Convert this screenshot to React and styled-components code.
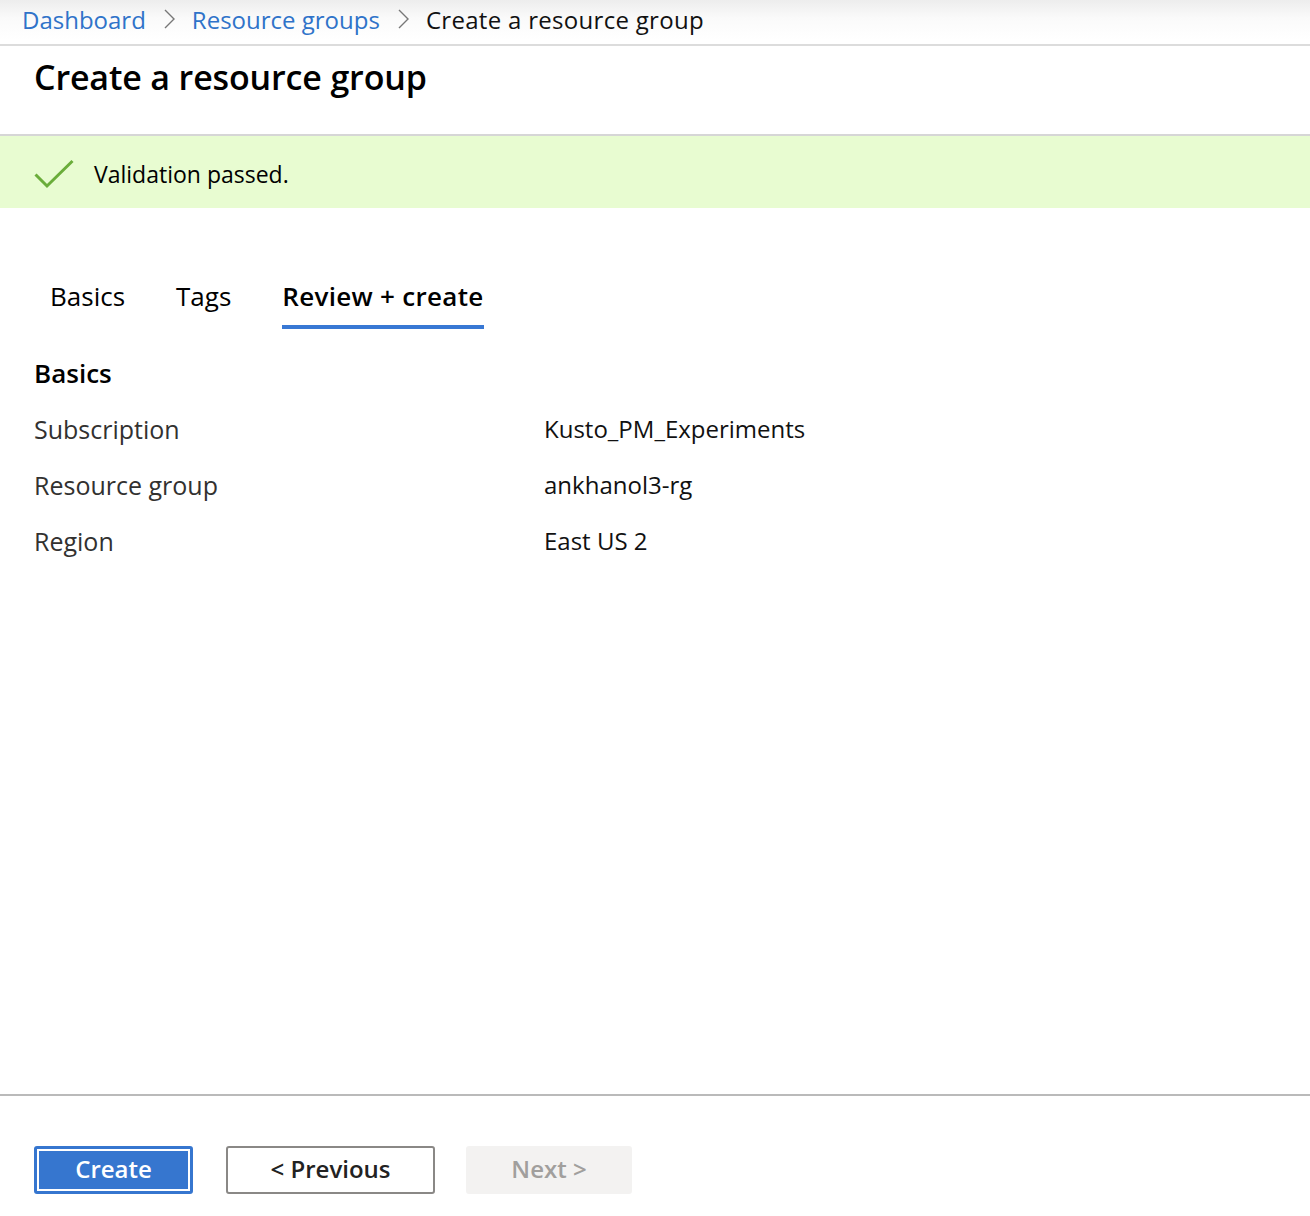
import React from "react";
import styled, { createGlobalStyle } from "styled-components";

const Global = createGlobalStyle`
  html, body { margin: 0; padding: 0; background: #fff; }
  body { font-family: "Open Sans", "Noto Sans", sans-serif; color: #000; }
  #root { min-height: 100vh; display: flex; flex-direction: column; }
`;

const Page = styled.div`
  flex: 1;
  display: flex;
  flex-direction: column;
  min-height: 1216px;
`;

const Breadcrumb = styled.nav`
  height: 46px;
  display: flex;
  align-items: center;
  padding: 0 0 6px 22px;
  box-sizing: border-box;
  background: linear-gradient(#ededed 0px, #fafafa 18px, #fff 40px);
  border-bottom: 2px solid #dcdcdc;
  font-size: 24px;
`;

const Crumb = styled.span`
  color: ${(p) => (p.$link ? "#2f73c9" : "#111")};
  letter-spacing: ${(p) => (p.$link ? "0" : "0.3px")};
`;

const Chevron = styled.svg`
  width: 12px;
  height: 20px;
  margin: 0 16px 0 18px;
`;

const Header = styled.header`
  height: 90px;
  display: flex;
  align-items: flex-start;
  padding: 8px 34px 0;
  box-sizing: border-box;
  border-bottom: 2px solid #d6d6d6;
`;

const Title = styled.h1`
  margin: 0;
  font-size: 34px;
  line-height: 46px;
  font-weight: 600;
  letter-spacing: -0.15px;
`;

const Banner = styled.div`
  height: 72px;
  background: #e8fcd1;
  display: flex;
  align-items: center;
  padding: 3px 0 0 34px;
  box-sizing: border-box;
  gap: 20px;
  font-size: 23px;
`;

const Content = styled.main`
  flex: 1;
  padding: 71px 34px 0;
`;

const Tabs = styled.div`
  display: flex;
  gap: 51px;
  padding-left: 16px;
`;

const Tab = styled.div`
  font-size: 26px;
  font-weight: ${(p) => (p.$active ? 600 : 400)};
  letter-spacing: ${(p) => (p.$active ? "0.3px" : "0")};
  padding-bottom: 12px;
  border-bottom: 4px solid ${(p) => (p.$active ? "#3878d4" : "transparent")};
  line-height: 34px;
`;

const SectionTitle = styled.h2`
  margin: 26px 0 0;
  font-size: 26px;
  font-weight: 600;
  line-height: 36px;
`;

const Row = styled.div`
  display: grid;
  grid-template-columns: 510px 1fr;
  align-items: center;
  margin-top: 20px;
  line-height: 36px;
`;

const Label = styled.div`
  color: #323130;
  font-size: 25px;
`;

const Value = styled.div`
  color: #111;
  font-size: 24px;
`;

const Footer = styled.footer`
  border-top: 2px solid #bababa;
  height: 122px;
  box-sizing: border-box;
  display: flex;
  align-items: flex-start;
  padding: 50px 34px 0;
`;

const Button = styled.button`
  height: 48px;
  box-sizing: border-box;
  border-radius: 3px;
  font-family: inherit;
  font-size: 24px;
  font-weight: 600;
  padding: 0 0 3px;
  width: ${(p) => p.$w}px;
  background: ${(p) => (p.$primary ? "#3676cf" : p.$disabled ? "#f3f2f1" : "#fff")};
  color: ${(p) => (p.$primary ? "#fff" : p.$disabled ? "#a19f9d" : "#222")};
  border: ${(p) =>
    p.$primary ? "3px solid #3676cf" : p.$disabled ? "2px solid #f3f2f1" : "2px solid #8a8886"};
  box-shadow: ${(p) => (p.$primary ? "inset 0 0 0 2px #fff" : "none")};
  margin-right: ${(p) => p.$mr || 0}px;
`;

const Check = () => (
  <svg width="40" height="30" viewBox="0 0 40 30">
    <path d="M1.5 15.5 L13 27 L38.5 2" fill="none" stroke="#6aad3a" strokeWidth="3" />
  </svg>
);

const Arrow = () => (
  <Chevron viewBox="0 0 12 20">
    <path d="M1 1 L10 10 L1 19" fill="none" stroke="#777" strokeWidth="1.4" />
  </Chevron>
);

export default function App() {
  const rows = [
    ["Subscription", "Kusto_PM_Experiments"],
    ["Resource group", "ankhanol3-rg"],
    ["Region", "East US 2"],
  ];
  return (
    <Page>
      <Global />
      <Breadcrumb>
        <Crumb $link>Dashboard</Crumb>
        <Arrow />
        <Crumb $link>Resource groups</Crumb>
        <Arrow />
        <Crumb>Create a resource group</Crumb>
      </Breadcrumb>
      <Header>
        <Title>Create a resource group</Title>
      </Header>
      <Banner>
        <Check />
        <span>Validation passed.</span>
      </Banner>
      <Content>
        <Tabs>
          <Tab>Basics</Tab>
          <Tab>Tags</Tab>
          <Tab $active>Review + create</Tab>
        </Tabs>
        <SectionTitle>Basics</SectionTitle>
        {rows.map(([l, v]) => (
          <Row key={l}>
            <Label>{l}</Label>
            <Value>{v}</Value>
          </Row>
        ))}
      </Content>
      <Footer>
        <Button $primary $w={159} $mr={33}>Create</Button>
        <Button $w={209} $mr={31}>&lt; Previous</Button>
        <Button $disabled $w={166}>Next &gt;</Button>
      </Footer>
    </Page>
  );
}
